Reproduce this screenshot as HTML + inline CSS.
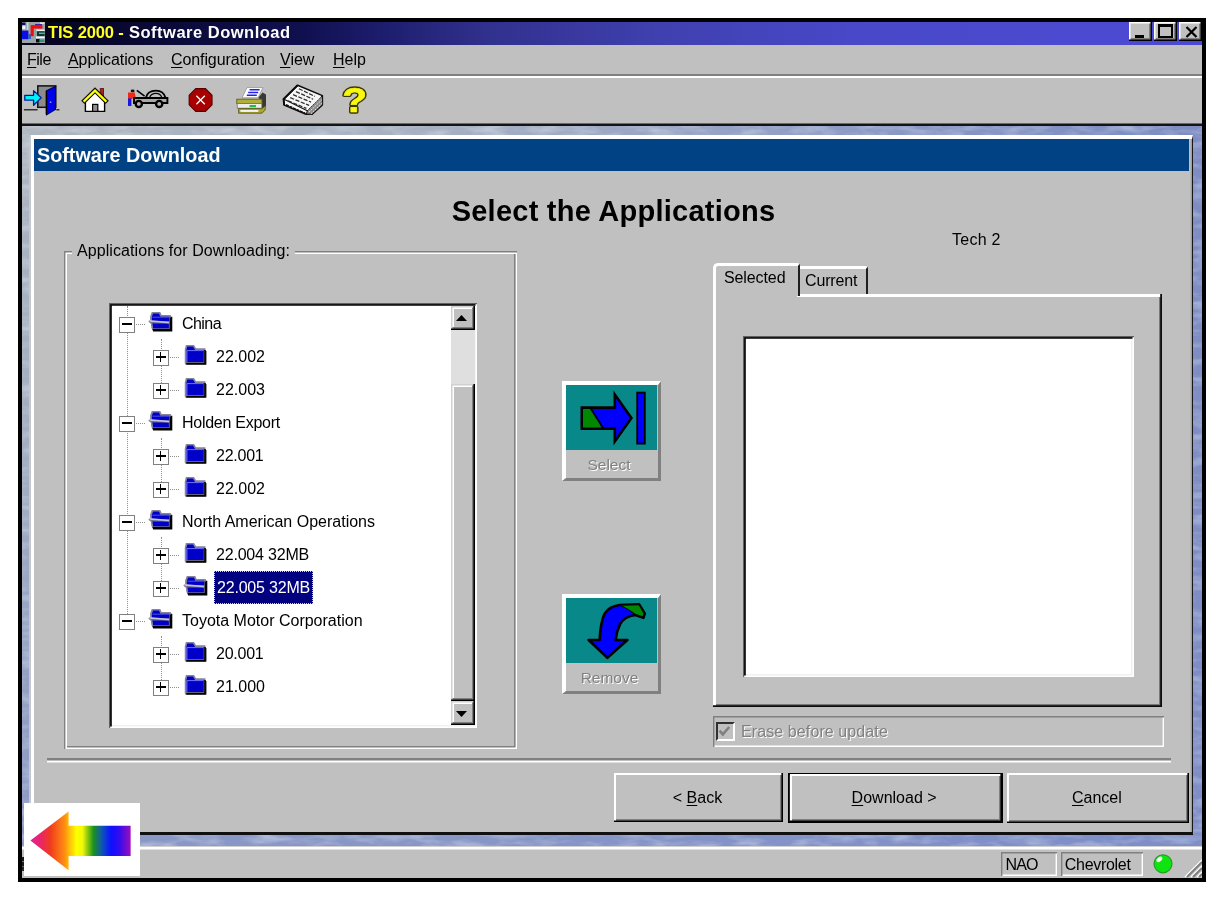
<!DOCTYPE html>
<html lang="en">
<head>
<meta charset="utf-8">
<title>TIS 2000 - Software Download</title>
<style>
*{box-sizing:border-box;margin:0;padding:0}
html,body{width:1224px;height:900px;background:#fff;overflow:hidden}
body{position:relative;font-family:"Liberation Sans",sans-serif;color:#000;font-size:16px;line-height:20px}
div,span,svg{position:absolute}
u{text-decoration:underline;text-underline-offset:2px;text-decoration-thickness:1px}
.nw{white-space:nowrap}
#frame{left:18px;top:18px;width:1188px;height:864px;background:#000}
#win{left:22px;top:22px;width:1180px;height:856px;background:#c0c0c0}
#title{left:22px;top:22px;width:1180px;height:23px;background:linear-gradient(90deg,#04041c 0%,#0a0a38 12%,#101050 24%,#1c1c6c 30%,#30308c 39%,#4040b0 54%,#4848c8 70%,#4c4ad0 88%,#4c4ad2 100%)}
.tt{top:21.5px;font-weight:bold;font-size:16.5px;line-height:20px;white-space:nowrap}
.menu{top:50px;font-size:16px;line-height:20px;white-space:nowrap}
.cap{width:23px;height:19px;top:22px;background:#c0c0c0;box-shadow:inset -1.5px -1.5px 0 #000,inset 1.5px 1.5px 0 #fff,inset -3px -3px 0 #808080}
#mdi{left:22px;top:126px;width:1180px;height:721px;background:linear-gradient(180deg,rgba(130,146,200,0) 0%,rgba(130,146,200,0.25) 50%,rgba(126,142,200,0.75) 100%),linear-gradient(90deg,#adb5bf 0%,#a6b0c1 35%,#96a2c5 60%,#8594c4 80%,#7d8cc2 100%)}
#inner{left:29px;top:135px;width:1164px;height:700px;background:#c0c0c0;border-style:solid;border-width:4px 1px 3px 5px;border-color:#fff #181818 #101010 #fff;box-shadow:inset -1.4px 0 0 #a0a0a0}
#inner:after{content:"";position:absolute;left:-5px;top:-4px;width:1.5px;height:698px;background:#c4c8cc}
#ihead{left:34px;top:139px;width:1155px;height:32px;background:#004284}
#ihead span{left:3px;top:5px;color:#fff;font-weight:bold;font-size:19.8px;line-height:22px;white-space:nowrap}
#h1{left:312px;top:191px;width:603px;text-align:center;font-weight:bold;font-size:29px;line-height:40px;white-space:nowrap;letter-spacing:0.25px}
.grp{box-shadow:inset 1.4px 1.4px 0 #808080,inset -1.4px -1.4px 0 #fff,inset 3px 3px 0 #fff,inset -3px -3px 0 #808080}
.sunk{background:#fff;box-shadow:inset 1.2px 1.2px 0 #606060,inset -1.5px -1.5px 0 #fff,inset 2.8px 2.8px 0 #000,inset -3px -3px 0 #f0f0f0}
.btn{background:#c0c0c0;text-align:center;box-shadow:inset -1.6px -1.6px 0 #000,inset 2px 2px 0 #fff,inset -3px -3px 0 #808080}
.dis{color:#808080;text-shadow:1px 1px 0 #fff}
.row{left:0;height:33px;width:340px}
.lbl{top:6px;font-size:16px;line-height:20px;white-space:nowrap;padding:0 3px}
.pm{width:16px;height:16px;border:1.4px solid #808080;background:#fff}
.pm i{position:absolute;left:1.5px;top:5.7px;width:10px;height:1.6px;background:#000}
.pm b{position:absolute;left:5.7px;top:1.5px;width:1.6px;height:10px;background:#000}
.vd{width:0;border-left:1.5px dotted #909090}
.hd{height:0;border-top:1.5px dotted #909090}
.sb{background:#c0c0c0;box-shadow:inset -1.6px -1.6px 0 #000,inset 1.5px 1.5px 0 #d0d0d0,inset -3px -3px 0 #808080,inset 3px 3px 0 #fff}
.ib{background:#c0c0c0;border-style:solid;border-width:4px 3px 3px 4px;border-color:#fff #808080 #808080 #fff}
.st{box-shadow:inset 1.4px 1.4px 0 #808080,inset -1.4px -1.4px 0 #fff}
</style>
</head>
<body>
<div id="all" style="left:0;top:0;width:1224px;height:900px;filter:blur(0.5px)">
<div id="frame"></div><div id="win"></div>
<div id="title"></div>
<svg style="left:22px;top:22px" width="23" height="21" viewBox="0 0 23 21">
<defs><filter id="ab" x="-5%" y="-5%" width="110%" height="110%"><feGaussianBlur stdDeviation="0.55"/></filter></defs>
<g filter="url(#ab)">
<rect x="0" y="0" width="23" height="21" fill="#9aa4a6"/>
<rect x="0" y="0.5" width="3.4" height="3" fill="#101060"/>
<rect x="0.3" y="3.4" width="3" height="3.8" fill="#f4f4ff"/>
<rect x="4.8" y="0" width="1.6" height="8" fill="#b8e0d8"/>
<rect x="0" y="8.6" width="6.4" height="8.6" fill="#0808e8"/>
<rect x="6" y="12" width="3" height="5" fill="#3060c0"/>
<rect x="8.6" y="3.2" width="3.2" height="11" fill="#f01010"/>
<rect x="9" y="3.2" width="11.4" height="3.4" fill="#f01010"/>
<rect x="13" y="2" width="7" height="1.4" fill="#4020b0"/>
<rect x="14" y="7.6" width="8.6" height="1.6" fill="#f8f8f8"/>
<rect x="15" y="9.2" width="7.6" height="5.2" fill="#083838"/>
<rect x="17" y="10.6" width="5.6" height="1.4" fill="#58b8a0"/>
<rect x="13" y="8" width="1.6" height="8" fill="#70b0a0"/>
<rect x="14" y="14.4" width="8.6" height="1.8" fill="#f8f8f8"/>
<rect x="14" y="17" width="3.6" height="3.4" fill="#080808"/>
<rect x="17.6" y="17.6" width="5" height="2.4" fill="#309078"/>
<rect x="18" y="0.4" width="4.4" height="1.4" fill="#e8f0f0"/>
</g></svg>
<span class="tt" style="left:48px;color:#ffff20;letter-spacing:-0.15px">TIS 2000 -</span>
<span class="tt" style="left:129px;color:#fff;letter-spacing:0.5px">Software Download</span>
<div class="cap" style="left:1129px"><div style="left:6px;top:12.5px;width:9px;height:3px;background:#000"></div></div>
<div class="cap" style="left:1153.5px"><div style="left:4.5px;top:2px;width:15px;height:14px;border:2px solid #000;border-top-width:3px"></div></div>
<div class="cap" style="left:1179px"><svg style="left:6px;top:3.5px" width="13" height="12" viewBox="0 0 13 12"><path d="M1.5 1 L11.5 11 M11.5 1 L1.5 11" stroke="#000" stroke-width="2.2" fill="none"/></svg></div>
<span class="menu" style="left:27px;letter-spacing:-0.5px"><u>F</u>ile</span>
<span class="menu" style="left:68px;letter-spacing:-0.1px"><u>A</u>pplications</span>
<span class="menu" style="left:171px;letter-spacing:-0.1px"><u>C</u>onfiguration</span>
<span class="menu" style="left:280px;letter-spacing:0px"><u>V</u>iew</span>
<span class="menu" style="left:333px;letter-spacing:0px"><u>H</u>elp</span>
<div style="left:22px;top:74px;width:1180px;height:2px;background:#808080"></div>
<div style="left:22px;top:76px;width:1180px;height:2px;background:#fff"></div>
<svg style="left:0;top:0" width="400" height="126" viewBox="0 0 400 126">
<g>
<path d="M23.9 109.8 H37.6 M56.3 109.8 H59.4" stroke="#303030" stroke-width="1.6"/>
<rect x="37.8" y="85.9" width="18" height="21.4" fill="#8c8c8c" stroke="#101010" stroke-width="1.5"/>
<path d="M46.6 90.8 L55.4 86.4 V109.4 L46.6 114.8Z" fill="#0000f0" stroke="#000070" stroke-width="1.2"/>
<path d="M46.3 90.8 V114.6" stroke="#000" stroke-width="1.3"/>
<circle cx="50.6" cy="102.2" r="0.9" fill="#8090ff"/>
<path d="M24.8 95.3 H33.6 V90.6 L41.2 97.8 L33.6 105.2 V100.2 H24.8Z" fill="#00f0f8" stroke="#002090" stroke-width="1.3" stroke-linejoin="round"/>
</g>
<g>
<rect x="100.2" y="88.6" width="3.4" height="7" fill="#a82020" stroke="#501010" stroke-width="0.8"/>
<path d="M85.4 101.4 L95 92 L104.6 101.4 V111.4 H85.4Z" fill="#fff" stroke="#000" stroke-width="1.4"/>
<rect x="92.6" y="104.4" width="5.2" height="7" fill="#909090" stroke="#000" stroke-width="1.2"/>
<path d="M82.8 102.4 L95 90.4 L107.2 102.4" fill="none" stroke="#101000" stroke-width="4.6" stroke-linejoin="miter"/>
<path d="M83.6 101.6 L95 90.6 L106.4 101.6" fill="none" stroke="#ffff10" stroke-width="2.2"/>
</g>
<g>
<path d="M128 92.6 H134.8 L135.6 97 L131.6 99 H128Z" fill="#f02818"/>
<rect x="128" y="98.4" width="3.4" height="7.6" fill="#1818e0"/>
<ellipse cx="132.6" cy="90.9" rx="2" ry="1.4" fill="#101010"/>
<path d="M136.8 90.4 L144.6 96.2" stroke="#000" stroke-width="1.6"/>
<path d="M134 98 H167.4 V103 H134Z" fill="#a8a8a8" stroke="#000" stroke-width="1.9"/>
<path d="M146 97.6 Q147.5 90.6 156 90.6 Q163.5 90.6 165.4 97.6" fill="none" stroke="#000" stroke-width="1.9"/>
<path d="M149.6 97.6 Q151 93.4 156 93.4 Q160.6 93.4 161.8 97.6" fill="none" stroke="#000" stroke-width="1.3"/>
<circle cx="138.8" cy="103.9" r="3.1" fill="#b0b0b0" stroke="#000" stroke-width="2.3"/>
<circle cx="159.2" cy="103.9" r="3.1" fill="#b0b0b0" stroke="#000" stroke-width="2.3"/>
</g>
<g>
<path d="M195.8 88.6 H205.4 L212 95.2 V104.8 L205.4 111.4 H195.8 L189.2 104.8 V95.2Z" fill="#a80000" stroke="#580000" stroke-width="1.2"/>
<path d="M196.4 95.8 L204.8 104.2 M204.8 95.8 L196.4 104.2" stroke="#fff" stroke-width="1.35"/>
</g>
<g>
<path d="M258 98 L262.6 92.4 L266 94.4 V106 L262 109.4 V100Z" fill="#383838"/>
<path d="M247 87.6 H263 L258 97.8 H242Z" fill="#fff" stroke="#909090" stroke-width="0.8"/>
<path d="M249.6 89.8 H259.6 M248.2 92.5 H258.2 M246.8 95.2 H256.8" stroke="#2020f0" stroke-width="1.5"/>
<rect x="236.8" y="99.2" width="25.2" height="4.4" fill="#b0b038" stroke="#606010" stroke-width="0.9"/>
<rect x="237.2" y="103.6" width="24.6" height="4.6" fill="#ececec" stroke="#707070" stroke-width="0.8"/>
<rect x="249.6" y="105" width="6.4" height="2.2" fill="#18c048"/>
<path d="M238.6 108.6 H262 L265.2 105.8 V110 L262 113.2 H238.6Z" fill="#a8a830" stroke="#505010" stroke-width="0.8"/>
<rect x="240.4" y="110" width="18" height="1.9" fill="#f4f4f4"/>
</g>
<g>
<path d="M297.6 85.2 L322.4 95.6 L322.4 104.9 L312.2 114.2 L306.0 114.2 L284.2 105.1 L283.6 99.1Z" fill="#f6f6f6" stroke="#0c0c0c" stroke-width="1.5" stroke-linejoin="round"/>
<path d="M307.3 110.7 L322.4 95.6 L322.4 104.9 L312.2 114.2 L306.4 114.2Z" fill="#8c8c8c" stroke="#101010" stroke-width="1"/>
<path d="M309.1 112.0 L322.0 99.6 M310.9 113.8 L322.2 103.1 M308.2 109.3 L320.7 97.3" stroke="#f0f0f0" stroke-width="0.9" stroke-dasharray="1.6 1.2"/>
<path d="M283.6 99.1 L307.3 110.7" stroke="#101010" stroke-width="1.1"/>
<path d="M286.0 104.9 L305.1 113.3" stroke="#101010" stroke-width="1.7" stroke-dasharray="3 0.8"/>
<path d="M297.6 85.2 L283.6 99.1 L284.2 105.1" fill="none" stroke="#0c0c0c" stroke-width="2"/>
<path d="M298.9 88.7 L314.9 96.4 M296.0 91.6 L313.1 99.2 M293.1 94.7 L311.1 102.2 M290.2 97.7 L309.1 105.4 M288.0 100.8 L306.4 108.4" stroke="#303030" stroke-width="1.25" stroke-dasharray="4.2 1.5"/>
</g>
<g transform="translate(354.6 0) scale(1.16 1) translate(-354.6 0)" font-family="Liberation Sans, sans-serif" font-weight="bold" font-size="35" text-anchor="middle">
<text x="354.6" y="112" fill="#383800" stroke="#383800" stroke-width="3.3" stroke-linejoin="round">?</text>
<text x="354.6" y="112" fill="#f8f810" stroke="#f8f810" stroke-width="0.7" stroke-linejoin="round">?</text></g>
</svg>
<div style="left:22px;top:123px;width:1180px;height:3px;box-shadow:inset 0 0.6px 0 #c0c0c0,inset 0 3px 0 #141414"></div>
<div id="mdi"></div>
<svg style="left:22px;top:126px;opacity:0.38" width="1180" height="721"><filter id="mtex" x="0" y="0" width="100%" height="100%"><feTurbulence type="fractalNoise" baseFrequency="0.035 0.12" numOctaves="3" seed="7"/><feColorMatrix type="matrix" values="0 0 0 0 0.85  0 0 0 0 0.9  0 0 0 0 0.95  2.2 0 0 0 -0.9"/></filter><rect width="1180" height="721" filter="url(#mtex)"/></svg>
<div id="inner"></div>
<div id="ihead"><span>Software Download</span></div>
<div id="h1">Select the Applications</div>
<span class="nw" style="left:952px;top:229.7px;letter-spacing:0.25px">Tech 2</span>
<div class="grp" style="left:64px;top:250.6px;width:453.4px;height:498.2px"></div>
<span class="nw" style="left:72px;top:241px;background:#c0c0c0;padding:0 5px;letter-spacing:0.08px">Applications for Downloading:</span>
<div class="sunk" style="left:108.6px;top:303.2px;width:368.8px;height:424.8px"></div>
<div id="tree" style="left:111px;top:306px;width:340px;height:419px;overflow:hidden">
<div class="vd" style="left:15.5px;top:0;height:308px"></div>
<div class="vd" style="left:49.5px;top:33px;height:52px"></div>
<div class="vd" style="left:49.5px;top:132px;height:52px"></div>
<div class="vd" style="left:49.5px;top:231px;height:52px"></div>
<div class="vd" style="left:49.5px;top:330px;height:52px"></div>
<div class="row" style="top:2px">
<div class="hd" style="left:25px;top:16px;width:9px"></div>
<div class="pm" style="left:8px;top:8.5px"><i></i></div>
<svg style="left:37px;top:4px" width="25" height="22" viewBox="0 0 25 22"><use href="#fo"/></svg>
<span class="lbl" style="left:68px;letter-spacing:-0.55px">China</span>
</div>
<div class="row" style="top:35px">
<div class="hd" style="left:59px;top:16px;width:9px"></div>
<div class="pm" style="left:42px;top:8.5px"><i></i><b></b></div>
<svg style="left:72px;top:4px" width="25" height="22" viewBox="0 0 25 22"><use href="#fc"/></svg>
<span class="lbl" style="left:102px;letter-spacing:0px">22.002</span>
</div>
<div class="row" style="top:68px">
<div class="hd" style="left:59px;top:16px;width:9px"></div>
<div class="pm" style="left:42px;top:8.5px"><i></i><b></b></div>
<svg style="left:72px;top:4px" width="25" height="22" viewBox="0 0 25 22"><use href="#fc"/></svg>
<span class="lbl" style="left:102px;letter-spacing:0px">22.003</span>
</div>
<div class="row" style="top:101px">
<div class="hd" style="left:25px;top:16px;width:9px"></div>
<div class="pm" style="left:8px;top:8.5px"><i></i></div>
<svg style="left:37px;top:4px" width="25" height="22" viewBox="0 0 25 22"><use href="#fo"/></svg>
<span class="lbl" style="left:68px;letter-spacing:-0.26px">Holden Export</span>
</div>
<div class="row" style="top:134px">
<div class="hd" style="left:59px;top:16px;width:9px"></div>
<div class="pm" style="left:42px;top:8.5px"><i></i><b></b></div>
<svg style="left:72px;top:4px" width="25" height="22" viewBox="0 0 25 22"><use href="#fc"/></svg>
<span class="lbl" style="left:102px;letter-spacing:-0.25px">22.001</span>
</div>
<div class="row" style="top:167px">
<div class="hd" style="left:59px;top:16px;width:9px"></div>
<div class="pm" style="left:42px;top:8.5px"><i></i><b></b></div>
<svg style="left:72px;top:4px" width="25" height="22" viewBox="0 0 25 22"><use href="#fc"/></svg>
<span class="lbl" style="left:102px;letter-spacing:0px">22.002</span>
</div>
<div class="row" style="top:200px">
<div class="hd" style="left:25px;top:16px;width:9px"></div>
<div class="pm" style="left:8px;top:8.5px"><i></i></div>
<svg style="left:37px;top:4px" width="25" height="22" viewBox="0 0 25 22"><use href="#fo"/></svg>
<span class="lbl" style="left:68px;letter-spacing:0px">North American Operations</span>
</div>
<div class="row" style="top:233px">
<div class="hd" style="left:59px;top:16px;width:9px"></div>
<div class="pm" style="left:42px;top:8.5px"><i></i><b></b></div>
<svg style="left:72px;top:4px" width="25" height="22" viewBox="0 0 25 22"><use href="#fc"/></svg>
<span class="lbl" style="left:102px;letter-spacing:-0.2px">22.004 32MB</span>
</div>
<div class="row" style="top:266px">
<div class="hd" style="left:59px;top:16px;width:9px"></div>
<div class="pm" style="left:42px;top:8.5px"><i></i><b></b></div>
<svg style="left:72px;top:4px" width="25" height="22" viewBox="0 0 25 22"><use href="#fo"/></svg>
<span class="lbl" style="left:103px;top:-1.5px;height:33px;line-height:33px;background:#000080;color:#fff;outline:1px dotted #e0e060;outline-offset:-1px;letter-spacing:-0.2px">22.005 32MB</span>
</div>
<div class="row" style="top:299px">
<div class="hd" style="left:25px;top:16px;width:9px"></div>
<div class="pm" style="left:8px;top:8.5px"><i></i></div>
<svg style="left:37px;top:4px" width="25" height="22" viewBox="0 0 25 22"><use href="#fo"/></svg>
<span class="lbl" style="left:68px;letter-spacing:0px">Toyota Motor Corporation</span>
</div>
<div class="row" style="top:332px">
<div class="hd" style="left:59px;top:16px;width:9px"></div>
<div class="pm" style="left:42px;top:8.5px"><i></i><b></b></div>
<svg style="left:72px;top:4px" width="25" height="22" viewBox="0 0 25 22"><use href="#fc"/></svg>
<span class="lbl" style="left:102px;letter-spacing:-0.25px">20.001</span>
</div>
<div class="row" style="top:365px">
<div class="hd" style="left:59px;top:16px;width:9px"></div>
<div class="pm" style="left:42px;top:8.5px"><i></i><b></b></div>
<svg style="left:72px;top:4px" width="25" height="22" viewBox="0 0 25 22"><use href="#fc"/></svg>
<span class="lbl" style="left:102px;letter-spacing:0px">21.000</span>
</div>
</div>
<div style="left:450.5px;top:306px;width:24px;height:419px;background:#dfdfdf"></div>
<div class="sb" style="left:450.5px;top:306px;width:24px;height:24px"><svg style="left:5.5px;top:9px" width="11" height="6" viewBox="0 0 11 6"><path d="M0 6 L5.5 0 L11 6Z" fill="#000"/></svg></div>
<div class="sb" style="left:450.5px;top:384px;width:24px;height:317px"></div>
<div class="sb" style="left:450.5px;top:701px;width:24px;height:24px"><svg style="left:5.5px;top:10px" width="11" height="6" viewBox="0 0 11 6"><path d="M0 0 L5.5 6 L11 0Z" fill="#000"/></svg></div>
<div class="ib" style="left:562px;top:381px;width:99px;height:100px"></div>
<div style="left:566px;top:385px;width:91px;height:65px;background:#088888"></div>
<svg style="left:566px;top:385px" width="91" height="65" viewBox="566 385 91 65">
<path d="M581.8 407.6 H614.8 V394.6 L631.4 418 L614.8 441.4 V428.6 H581.8Z" fill="#0000ff" stroke="#000" stroke-width="2.6" stroke-linejoin="miter"/>
<path d="M583 409 H590 L599.6 424 L601 427.4 H583Z" fill="#008800"/>
<path d="M590.6 408 L600 423 L603 428" fill="none" stroke="#000" stroke-width="1.6"/>
<rect x="637.2" y="392.6" width="7.6" height="51" fill="#0000ff" stroke="#000" stroke-width="1.8"/>
</svg>
<span class="nw dis" style="left:560.5px;width:97px;top:455px;text-align:center;font-size:15.5px">Select</span>
<div class="ib" style="left:562px;top:594px;width:99px;height:100px"></div>
<div style="left:566px;top:598px;width:91px;height:65px;background:#088888"></div>
<svg style="left:566px;top:598px" width="91" height="65" viewBox="566 598 91 65">
<path d="M588.6 640 H599.6 Q600.6 622 604.6 613.6 Q609 606.4 619.4 605 L639.2 604.4 L644.8 613.6 L643.4 617.8 L635.4 615 Q624 616.4 620 624.4 Q616.6 631 615.6 640 H627.4 L607.4 657.8Z" fill="#0000ff" stroke="#000" stroke-width="2.6" stroke-linejoin="round"/>
<path d="M620.4 605.2 L639 604.8 L644 613.6 L643 616.8 L635.6 614.4 Q628 609 620.4 605.2Z" fill="#008800" stroke="#000" stroke-width="1"/>
</svg>
<span class="nw dis" style="left:561px;width:97px;top:668px;text-align:center;font-size:15.5px">Remove</span>
<div style="left:713.4px;top:294px;width:449px;height:412.8px;box-shadow:inset -1.8px -1.8px 0 #0c0c0c,inset 3px 3px 0 #fff,inset -3px -3px 0 #787878"></div>
<div style="left:799px;top:266px;width:69px;height:28px;border-style:solid;border-width:3px 2px 0 0;border-color:#fff #202020 #fff #fff;border-top-right-radius:3px"></div>
<div style="left:713px;top:263px;width:86.5px;height:33px;background:#c0c0c0;border-style:solid;border-width:3px 2px 0 3px;border-color:#fff #202020 #fff #fff;border-top-left-radius:5px;border-top-right-radius:3px"></div>
<div style="left:716px;top:294px;width:81px;height:4px;background:#c0c0c0"></div>
<span class="nw" style="left:724px;top:268px;letter-spacing:-0.1px">Selected</span>
<span class="nw" style="left:805px;top:271px;letter-spacing:-0.15px">Current</span>
<div class="sunk" style="left:743.4px;top:336.2px;width:391px;height:340.6px"></div>
<div class="st" style="left:713px;top:716px;width:451px;height:31px"></div>
<div style="left:715.5px;top:722px;width:19px;height:19px;background:#c0c0c0;border-style:solid;border-width:2.5px 2px 2px 2.5px;border-color:#303030 #fff #fff #303030"></div>
<svg style="left:717px;top:724px" width="15" height="15" viewBox="0 0 15 15"><path d="M2.6 6.6 L5.8 10.4 L12.2 3" fill="none" stroke="#808080" stroke-width="2.6"/></svg>
<span class="nw dis" style="left:741px;top:722px;letter-spacing:0.1px">Erase before update</span>
<div style="left:46.5px;top:758px;width:1124.5px;height:5px;box-shadow:inset 0 2.5px 0 #808080,inset 0 4.6px 0 #fff"></div>
<div class="btn" style="left:614px;top:773px;width:169px;height:49.4px"><span class="nw" style="left:0;width:167px;top:15px">&lt; <u>B</u>ack</span></div>
<div style="left:788px;top:772.6px;width:215.2px;height:50.6px;box-shadow:inset 0 0 0 1.8px #000"></div>
<div class="btn" style="left:789.6px;top:774.2px;width:212px;height:47.4px"><span class="nw" style="left:0;width:209px;top:14px"><u>D</u>ownload &gt;</span></div>
<div class="btn" style="left:1007.4px;top:773px;width:182px;height:49.6px"><span class="nw" style="left:0;width:179px;top:15px"><u>C</u>ancel</span></div>
<div style="left:22px;top:846px;width:1180px;height:4px;box-shadow:inset 0 0.8px 0 #c0c0c0,inset 0 3.4px 0 #fff"></div>
<div class="st" style="left:1001.4px;top:852.4px;width:55.6px;height:23.2px"><span class="nw" style="left:4px;top:2.6px;letter-spacing:-0.8px">NAO</span></div>
<div class="st" style="left:1060.6px;top:852.4px;width:82.6px;height:23.2px"><span class="nw" style="left:4.2px;top:2.6px;letter-spacing:-0.3px">Chevrolet</span></div>
<svg style="left:1152px;top:853px" width="22" height="22" viewBox="0 0 22 22"><circle cx="11" cy="10.8" r="9" fill="#10e410" stroke="#20a020" stroke-width="1.2"/><ellipse cx="7.4" cy="6.4" rx="3.4" ry="2" transform="rotate(-40 7.4 6.4)" fill="#f0fff0"/></svg>
<svg style="left:1184px;top:858px" width="18" height="20" viewBox="0 0 18 20"><path d="M18 2 L1 19 M18 8 L7 19 M18 14 L13 19" stroke="#fff" stroke-width="1.5"/><path d="M18 4 L3 19 M18 10 L9 19 M18 16 L15 19" stroke="#808080" stroke-width="2"/></svg>
<div style="left:22.4px;top:857px;width:2px;height:13.5px;background:linear-gradient(180deg,#181818 0,#181818 25%,#707070 32%,#181818 40%,#181818 60%,#606060 68%,#202020 76%,#303030 100%)"></div>
<div style="left:24px;top:803px;width:116px;height:73px;background:#fff"></div>
<svg style="left:24px;top:803px" width="116" height="73" viewBox="24 803 116 73">
<defs><linearGradient id="rb" gradientUnits="userSpaceOnUse" x1="30" y1="0" x2="131" y2="0">
<stop offset="0" stop-color="#e0209c"/><stop offset="0.08" stop-color="#ea2078"/><stop offset="0.2" stop-color="#f03a20"/><stop offset="0.34" stop-color="#ff8c10"/><stop offset="0.46" stop-color="#ffff00"/><stop offset="0.52" stop-color="#f0f808"/><stop offset="0.63" stop-color="#189020"/><stop offset="0.72" stop-color="#1050c0"/><stop offset="0.8" stop-color="#1010ff"/><stop offset="0.88" stop-color="#3010f0"/><stop offset="1" stop-color="#a008b8"/></linearGradient>
<filter id="bl" x="-5%" y="-5%" width="110%" height="110%"><feGaussianBlur stdDeviation="0.7"/></filter></defs>
<path d="M30.4 840.6 L68.6 811.4 V825.8 H130.6 V856 H68.6 V870.2Z" fill="url(#rb)" filter="url(#bl)"/>
</svg>
</div>
<svg width="0" height="0" style="left:0;top:0"><defs>
<g id="fc">
<path d="M2.6 19.6 V6 H23.4 V19.6Z" fill="#000"/>
<path d="M2.6 4.6 L3.6 0.6 H10.4 L12.6 4.2 H21.6 V17.8 H2.6Z" fill="#0000c8" stroke="#84849c" stroke-width="1.7"/>
<path d="M3.9 17 V5.6 H20.6" fill="none" stroke="#7070ff" stroke-width="1"/>
<path d="M22 5 V18.6 H3.4" fill="none" stroke="#000" stroke-width="1.6"/>
</g>
<g id="fo">
<path d="M5.2 19.5 H24.3 V4.8 H21.4 V16.4 H4Z" fill="#000"/>
<path d="M3 10 V4.6 L4.4 0.7 H11.6 L13 3.9 H22.2 V10.4Z" fill="#0000c8" stroke="#84849c" stroke-width="1.8" stroke-linejoin="round"/>
<path d="M4.4 5.2 H21" fill="none" stroke="#5858e8" stroke-width="0.9"/>
<path d="M3.4 10.6 L21.4 11.2 L21.6 16.9 H4.6Z" fill="#0000c8" stroke="#6c6c8c" stroke-width="1.3"/>
<path d="M0.8 8.9 L21.2 10.5" fill="none" stroke="#c4c4d4" stroke-width="1.7"/>
<path d="M0.8 9.2 L3.6 11.6 L4.4 16.6" fill="none" stroke="#84849c" stroke-width="1.3"/>
<path d="M22.7 5.4 V18 H5" fill="none" stroke="#000" stroke-width="1.9"/>
</g>
</defs></svg>
</body>
</html>
